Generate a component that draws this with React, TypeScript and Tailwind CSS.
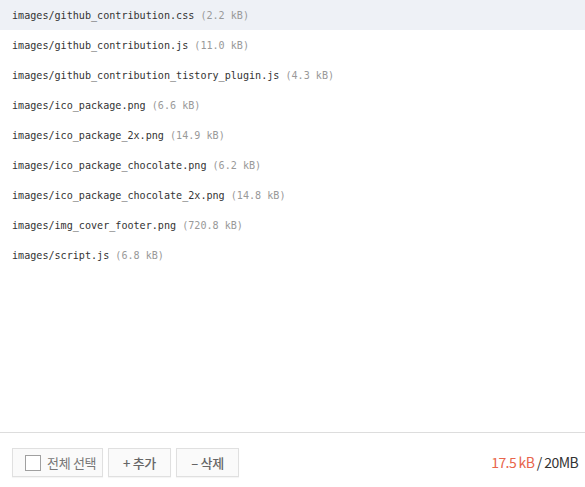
import React from "react";

const files: [string, string][] = [
  ["images/github_contribution.css", "(2.2 kB)"],
  ["images/github_contribution.js", "(11.0 kB)"],
  ["images/github_contribution_tistory_plugin.js", "(4.3 kB)"],
  ["images/ico_package.png", "(6.6 kB)"],
  ["images/ico_package_2x.png", "(14.9 kB)"],
  ["images/ico_package_chocolate.png", "(6.2 kB)"],
  ["images/ico_package_chocolate_2x.png", "(14.8 kB)"],
  ["images/img_cover_footer.png", "(720.8 kB)"],
  ["images/script.js", "(6.8 kB)"],
];

const sans = { fontFamily: '"Noto Sans CJK KR", "Noto Sans", sans-serif' };

export default function App() {
  return (
    <div className="w-[585px] h-[487px] bg-white flex flex-col overflow-hidden">
      <div className="flex-1">
        {files.map(([name, size], i) => (
          <div
            key={name}
            className={`h-[30px] flex items-center pl-3 pt-[2px] text-[10.1px] whitespace-pre ${i === 0 ? "bg-[#eef1f6]" : ""}`}
            style={{ fontFamily: '"DejaVu Sans Mono", monospace' }}
          >
            <span className="text-[#333]">{name}</span>
            <span className="text-[#999]"> {size}</span>
          </div>
        ))}
      </div>
      <div className="h-[55px] border-t border-[#ddd] flex items-start pt-[15px] pl-3 pr-[7px]" style={sans}>
        <div className="flex gap-[5px]">
          <button className="h-[29px] w-[91px] border border-[#e0e0e0] bg-[#fafafa] flex items-center pl-3 gap-[6px] text-[13px] text-[#777] shadow-[0_1px_1px_rgba(0,0,0,0.04)]">
            <span className="w-4 h-4 border border-[#a0a0a0] bg-white" />
            <span className="tracking-[-0.3px]">전체 선택</span>
          </button>
          <button className="h-[29px] w-[63px] border border-[#e0e0e0] bg-[#fafafa] flex items-center justify-center text-[13px] font-medium text-[#666] shadow-[0_1px_1px_rgba(0,0,0,0.04)]">
            <span className="tracking-[-0.3px]">+ 추가</span>
          </button>
          <button className="h-[29px] w-[63px] border border-[#e0e0e0] bg-[#fafafa] flex items-center justify-center text-[13px] font-medium text-[#666] shadow-[0_1px_1px_rgba(0,0,0,0.04)]">
            <span className="tracking-[-0.3px]">– 삭제</span>
          </button>
        </div>
        <div className="ml-auto h-[29px] flex items-center text-[14px] tracking-[-0.6px]">
          <span className="text-[#e8654b]">17.5 kB</span>
          <span className="text-[#333]">&nbsp;/ 20MB</span>
        </div>
      </div>
    </div>
  );
}
